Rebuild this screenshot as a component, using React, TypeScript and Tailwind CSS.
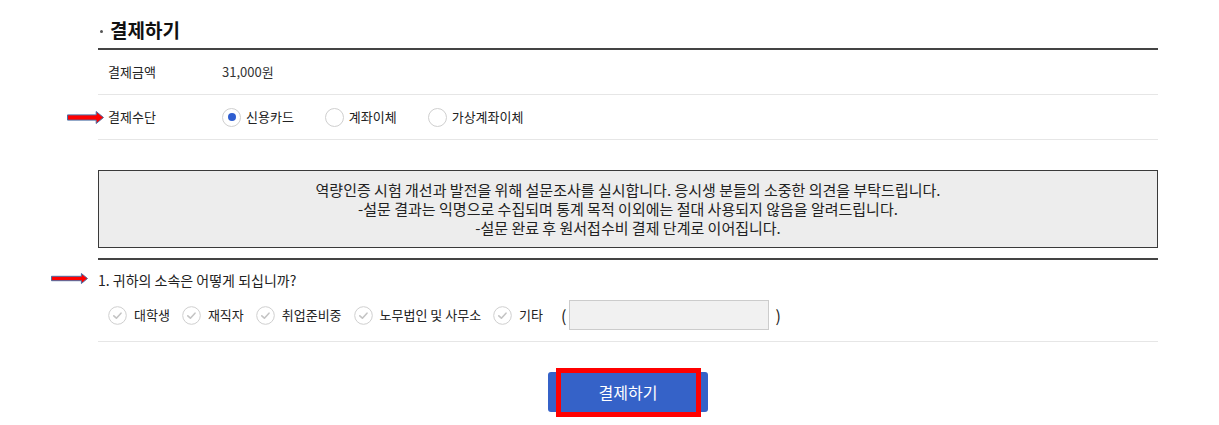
import React, { useState } from 'react';

const FONT = "font-['Malgun_Gothic','Noto_Sans_CJK_KR','Noto_Sans',sans-serif]";

function Arrow({ w, h }: { w: number; h: number }) {
  // red block arrow with thin blue-gray outline
  const shaftTop = h * 0.3;
  const shaftBot = h * 0.7;
  const headX = w - h * 0.6;
  return (
    <svg width={w} height={h} viewBox={`0 0 ${w} ${h}`}>
      <polygon
        points={`0.5,${shaftTop} ${headX},${shaftTop} ${headX},0.5 ${w - 0.5},${h / 2} ${headX},${h - 0.5} ${headX},${shaftBot} 0.5,${shaftBot}`}
        fill="#ff0000"
        stroke="#4a6fa5"
        strokeWidth="1"
      />
    </svg>
  );
}

function CheckCircle() {
  return (
    <svg width="19" height="19" viewBox="0 0 19 19" className="shrink-0">
      <circle cx="9.5" cy="9.5" r="8.8" fill="#fff" stroke="#cfcfcf" strokeWidth="1" />
      <path d="M5.8 9.8 L8.4 12.2 L13 7.2" fill="none" stroke="#c4c4c4" strokeWidth="1.6" strokeLinecap="round" strokeLinejoin="round" />
    </svg>
  );
}

export default function App() {
  const [method, setMethod] = useState('card');
  const methods = [
    { id: 'card', label: '신용카드' },
    { id: 'bank', label: '계좌이체' },
    { id: 'virtual', label: '가상계좌이체' },
  ];
  const options = ['대학생', '재직자', '취업준비중', '노무법인 및 사무소'];

  return (
    <div className={`${FONT} bg-white w-[1219px] h-[425px] overflow-hidden text-[#222]`}>
      <div className="ml-[98px] w-[1060px]">
        {/* 제목 */}
        <div className="pt-[18px] pb-[6px] border-b-2 border-[#444] flex items-center">
          <span className="w-[3px] h-[3px] rounded-full bg-[#555] ml-[2px] mr-[7px] mt-[3px]"></span>
          <h2 className="text-[19px] leading-[24px] font-bold text-[#111]">결제하기</h2>
        </div>

        <div className="h-[45px] border-b border-[#e6e6e6] flex items-center text-[13px]">
          <span className="w-[124px] pl-[10px]">결제금액</span>
          <span className="text-[#333]">31,000원</span>
        </div>

        <div className="relative h-[45px] border-b border-[#e6e6e6] flex items-center text-[13px]">
          <div className="absolute left-[-31px] top-[16px]">
            <Arrow w={37} h={13} />
          </div>
          <span className="w-[124px] pl-[10px]">결제수단</span>
          <div className="flex items-center">
            {methods.map((m) => (
              <label
                key={m.id}
                onClick={() => setMethod(m.id)}
                className="flex items-center mr-[31px] cursor-pointer"
              >
                <span className="w-[19px] h-[19px] rounded-full border border-[#cfcfcf] flex items-center justify-center mr-[5px]">
                  {method === m.id && <span className="w-[8px] h-[8px] rounded-full bg-[#2f5ed0]"></span>}
                </span>
                <span>{m.label}</span>
              </label>
            ))}
          </div>
        </div>

        {/* 안내 */}
        <div className="mt-[30px] h-[78px] border border-[#3a3a3a] bg-[#ededed] pt-[9px] text-center text-[15px] leading-[19px] text-[#222]">
          <p>역량인증 시험 개선과 발전을 위해 설문조사를 실시합니다. 응시생 분들의 소중한 의견을 부탁드립니다.</p>
          <p>-설문 결과는 익명으로 수집되며 통계 목적 이외에는 절대 사용되지 않음을 알려드립니다.</p>
          <p>-설문 완료 후 원서접수비 결제 단계로 이어집니다.</p>
        </div>

        <div className="mt-[10px] h-[2px] bg-[#444]"></div>

        <div className="relative mt-[10px] text-[14px] leading-[20px]">
          <div className="absolute left-[-47px] top-[3px]">
            <Arrow w={37} h={11} />
          </div>
          1. 귀하의 소속은 어떻게 되십니까?
        </div>

        <div className="mt-[10px] pb-[11px] border-b border-[#e6e6e6] flex items-center text-[13px] pl-[10px]">
          {options.map((o) => (
            <label key={o} className="flex items-center mr-[12px]">
              <CheckCircle />
              <span className="ml-[7px]">{o}</span>
            </label>
          ))}
          <label className="flex items-center">
            <CheckCircle />
            <span className="ml-[7px]">기타</span>
          </label>
          <span className="ml-[18px] text-[16px]">(</span>
          <input className="ml-[3px] w-[200px] h-[30px] bg-[#f1f1f1] border border-[#cccccc] outline-none" />
          <span className="ml-[6px] text-[16px]">)</span>
        </div>

        <div className="mt-[30px] flex justify-center">
          <div className="w-[160px] h-[40px] bg-[#3562c8] rounded-[3px] flex items-center justify-center">
            <button className="shrink-0 w-[145px] h-[49px] border-[5px] border-[#ff0000] bg-[#3562c8] text-white text-[16px]">
              결제하기
            </button>
          </div>
        </div>
      </div>
    </div>
  );
}
